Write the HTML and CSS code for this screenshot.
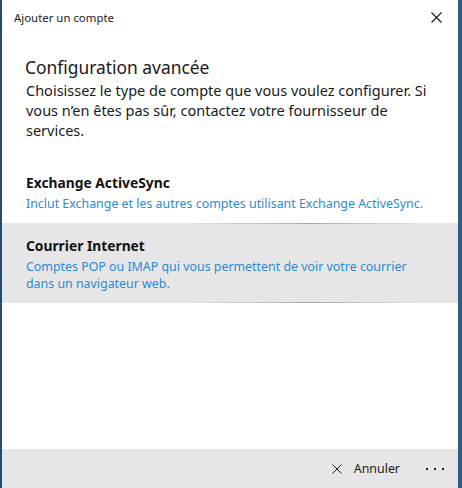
FILE: index.html
```html
<!DOCTYPE html>
<html lang="fr">
<head>
<meta charset="utf-8">
<title>Ajouter un compte</title>
<link rel="stylesheet" href="styles.css">
</head>
<body>
<div class="window">
  <header class="titlebar">
    <span class="titlebar-text">Ajouter un compte</span>
    <button class="close" aria-label="Fermer">
      <svg width="11" height="11" viewBox="0 0 11 11"><path d="M0.5 0.5 L10.5 10.5 M10.5 0.5 L0.5 10.5" stroke="#1a1a1a" stroke-width="1.1" fill="none"/></svg>
    </button>
  </header>
  <main class="content">
    <h1 class="heading">Configuration avancée</h1>
    <p class="intro">Choisissez le type de compte que vous voulez configurer. Si vous n’en êtes pas sûr, contactez votre fournisseur de services.</p>
    <ul class="options">
      <li class="option">
        <div class="option-title">Exchange ActiveSync</div>
        <div class="option-desc">Inclut Exchange et les autres comptes utilisant Exchange ActiveSync.</div>
      </li>
      <li class="option option-hover">
        <div class="option-title">Courrier Internet</div>
        <div class="option-desc">Comptes POP ou IMAP qui vous permettent de voir votre courrier dans un navigateur web.</div>
      </li>
    </ul>
  </main>
  <footer class="commandbar">
    <button class="cmd cancel">
      <svg width="10" height="10" viewBox="0 0 10 10"><path d="M0.5 0.5 L9.5 9.5 M9.5 0.5 L0.5 9.5" stroke="#1a1a1a" stroke-width="1" fill="none"/></svg>
      <span>Annuler</span>
    </button>
    <button class="cmd more" aria-label="Plus">
      <span class="dot"></span><span class="dot"></span><span class="dot"></span>
    </button>
  </footer>
</div>
</body>
</html>
```

FILE: styles.css
```css
* { box-sizing: border-box; }
html, body { margin: 0; padding: 0; }
body {
  width: 462px;
  height: 488px;
  overflow: hidden;
  font-family: "Noto Sans", "Open Sans", sans-serif;
  color: #1a1a1a;
  background: #ffffff;
}
.window {
  display: flex;
  flex-direction: column;
  width: 462px;
  height: 488px;
  border-left: 2px solid #1f4c75;
  border-right: 4px solid #2c5d88;
  background: #ffffff;
}
.titlebar {
  height: 34px;
  flex: none;
  display: flex;
  align-items: center;
  justify-content: space-between;
  padding-left: 12px;
}
.titlebar-text {
  font-size: 11.4px;
  color: #1a1a1a;
}
.close {
  width: 46px;
  height: 34px;
  border: 0;
  background: transparent;
  padding: 0 0 0 2px;
  display: flex;
  align-items: center;
  justify-content: center;
}
.content {
  flex: 1;
  padding-top: 20px;
}
.heading {
  margin: 0;
  padding: 0 24px 0 23px;
  font-size: 17.4px;
  line-height: 26px;
  font-weight: 400;
  color: #1a1a1a;
}
.intro {
  margin: 0;
  padding: 0 28px 0 24px;
  font-size: 14.5px;
  line-height: 20px;
  color: #1a1a1a;
}
.options {
  list-style: none;
  margin: 20px 0 0;
  padding: 0;
}
.option {
  position: relative;
  padding: 12px 28px 11px 24px;
}
.option-hover {
  background: #e6e6e6;
}
.option-hover::before,
.option-hover::after {
  content: "";
  position: absolute;
  left: 0;
  right: 0;
  height: 1px;
  background: linear-gradient(90deg, rgba(160,160,160,0) 40%, rgba(160,160,160,0.9) 68%, rgba(160,160,160,0) 92%);
}
.option-hover::before { top: 0; }
.option-hover::after { bottom: 0; }
.option-title {
  font-size: 13.8px;
  line-height: 22px;
  font-weight: 700;
  color: #111111;
}
.option-desc {
  margin-top: 1px;
  font-size: 12.4px;
  line-height: 17px;
  color: #2a8ad6;
}
.commandbar {
  height: 39px;
  flex: none;
  background: #e6e6e6;
  display: flex;
  align-items: center;
  justify-content: flex-end;
  padding-right: 14px;
}
.cmd {
  border: 0;
  background: transparent;
  font-family: inherit;
  color: #1a1a1a;
  display: flex;
  align-items: center;
  padding: 0;
}
.cancel {
  gap: 12px;
  font-size: 12.4px;
  margin-right: 26px;
}
.more {
  gap: 6px;
  padding-top: 1px;
}
.dot {
  width: 2px;
  height: 2px;
  background: #1a1a1a;
  display: block;
}
```
